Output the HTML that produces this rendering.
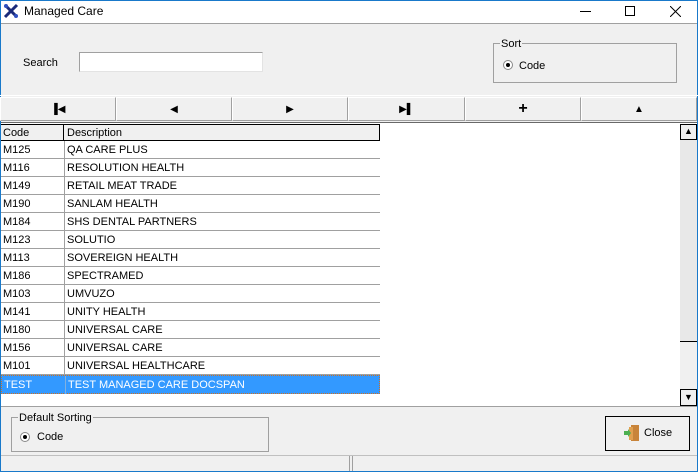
<!DOCTYPE html><html><head><style>
*{margin:0;padding:0;box-sizing:border-box}
body{width:698px;height:472px;position:relative;background:#f0f0f0;font-family:"Liberation Sans",sans-serif;font-size:11px;overflow:hidden}
.a{position:absolute}
.btn{position:absolute;top:97px;height:24px;border:1px solid;border-color:#fff #a0a0a0 #a0a0a0 #fff;background:#f0f0f0;display:flex;align-items:center;justify-content:center;font-size:10px}
.row{position:absolute;left:1px;width:379px;height:18px;border-bottom:1px solid #a0a0a0;background:#fff}
.row span{position:absolute;top:3px}
.row .c{left:2px}.row .d{border-left:1px solid #a0a0a0;height:18px;top:0;padding-top:3px;padding-left:2px;left:63px}
</style></head><body>
<div class="a" style="left:0;top:0;width:698px;height:24px;background:#fff;border-bottom:1px solid #a0a0a0"></div>
<div class="a" style="left:0;top:0;width:1px;height:472px;background:#1979ca"></div>
<div class="a" style="right:0;top:0;width:1px;height:472px;background:#1979ca"></div>
<div class="a" style="left:0;bottom:0;width:698px;height:1px;background:#1979ca"></div>
<div class="a" style="left:0;top:0;width:698px;height:1px;background:#1979ca"></div>
<svg class="a" style="left:3px;top:3px" width="16" height="16"><path d="M2 2L14 14M14 2L2 14" stroke="#1a2a7a" stroke-width="3"/><circle cx="3" cy="3" r="2" fill="#3050c0"/><circle cx="13" cy="13" r="2" fill="#3050c0"/></svg>
<div class="a" style="left:24px;top:4px;font-size:12px">Managed Care</div>
<div class="a" style="left:580px;top:11px;width:11px;height:1px;background:#000"></div>
<div class="a" style="left:625px;top:6px;width:10px;height:10px;border:1px solid #000"></div>
<svg class="a" style="left:670px;top:6px" width="11" height="11"><path d="M0 0L11 11M11 0L0 11" stroke="#000"/></svg>
<div class="a" style="left:23px;top:57px">Search</div>
<div class="a" style="left:79px;top:52px;width:184px;height:20px;background:#fff;border:1px solid;border-color:#a0a0a0 #e3e3e3 #e3e3e3 #a0a0a0"></div>
<div class="a" style="left:493px;top:43px;width:184px;height:40px;border:1px solid #a0a0a0"></div>
<div class="a" style="left:500px;top:38px;background:#f0f0f0;padding:0 1px">Sort</div>
<div class="a" style="left:503px;top:60px;width:10px;height:10px;border-radius:50%;background:#fff;border:1px solid #888"><div class="a" style="left:2px;top:2px;width:4px;height:4px;border-radius:50%;background:#000"></div></div>
<div class="a" style="left:519px;top:60px">Code</div>
<div class="a" style="left:0;top:95px;width:698px;height:1px;background:#fff"></div>
<div class="btn" style="left:0;width:116px">▐◀</div>
<div class="btn" style="left:116px;width:116px">◀</div>
<div class="btn" style="left:232px;width:116px">▶</div>
<div class="btn" style="left:348px;width:117px">▶▌</div>
<div class="btn" style="left:465px;width:116px;font-size:16px;font-weight:bold">+</div>
<div class="btn" style="left:581px;width:116px">▲</div>
<div class="a" style="left:1px;top:122px;width:696px;height:284px;background:#fff;border-top:1px solid #696969"></div>
<div class="a" style="left:1px;top:124px;width:379px;height:17px;background:#f0f0f0;border:1px solid #000;border-left:none"></div>
<div class="a" style="left:63px;top:124px;width:1px;height:17px;background:#000"></div>
<div class="a" style="left:3px;top:127px">Code</div>
<div class="a" style="left:67px;top:127px">Description</div>
<div class="row" style="top:141px"><span class="c">M125</span><span class="d">QA CARE PLUS</span></div>
<div class="row" style="top:159px"><span class="c">M116</span><span class="d">RESOLUTION HEALTH</span></div>
<div class="row" style="top:177px"><span class="c">M149</span><span class="d">RETAIL MEAT TRADE</span></div>
<div class="row" style="top:195px"><span class="c">M190</span><span class="d">SANLAM HEALTH</span></div>
<div class="row" style="top:213px"><span class="c">M184</span><span class="d">SHS DENTAL PARTNERS</span></div>
<div class="row" style="top:231px"><span class="c">M123</span><span class="d">SOLUTIO</span></div>
<div class="row" style="top:249px"><span class="c">M113</span><span class="d">SOVEREIGN HEALTH</span></div>
<div class="row" style="top:267px"><span class="c">M186</span><span class="d">SPECTRAMED</span></div>
<div class="row" style="top:285px"><span class="c">M103</span><span class="d">UMVUZO</span></div>
<div class="row" style="top:303px"><span class="c">M141</span><span class="d">UNITY HEALTH</span></div>
<div class="row" style="top:321px"><span class="c">M180</span><span class="d">UNIVERSAL CARE</span></div>
<div class="row" style="top:339px"><span class="c">M156</span><span class="d">UNIVERSAL CARE</span></div>
<div class="row" style="top:357px"><span class="c">M101</span><span class="d">UNIVERSAL HEALTHCARE</span></div>
<div class="row" style="top:375px;height:19px;background:#3399ff;color:#fff;border:1px dotted #d07020"><span class="c">TEST</span><span class="d" style="border-left-color:#80b0e0">TEST MANAGED CARE DOCSPAN</span></div>
<div class="a" style="left:680px;top:124px;width:17px;height:282px;background:#e8e8e8"></div>
<div class="a" style="left:680px;top:124px;width:17px;height:16px;background:#f0f0f0;border:1px solid #000;font-size:9px;text-align:center;line-height:13px">▲</div>
<div class="a" style="left:680px;top:341px;width:17px;height:48px;background:#f0f0f0;border-top:1px solid #000"></div>
<div class="a" style="left:680px;top:389px;width:17px;height:17px;background:#f0f0f0;border:1px solid #000;font-size:9px;text-align:center;line-height:14px">▼</div>
<div class="a" style="left:1px;top:406px;width:696px;height:1px;background:#a0a0a0"></div>
<div class="a" style="left:11px;top:417px;width:258px;height:35px;border:1px solid #a0a0a0"></div>
<div class="a" style="left:18px;top:412px;background:#f0f0f0;padding:0 1px">Default Sorting</div>
<div class="a" style="left:20px;top:432px;width:10px;height:10px;border-radius:50%;background:#fff;border:1px solid #888"><div class="a" style="left:2px;top:2px;width:4px;height:4px;border-radius:50%;background:#000"></div></div>
<div class="a" style="left:37px;top:431px">Code</div>
<div class="a" style="left:605px;top:416px;width:85px;height:35px;border:1px solid #000;background:#f0f0f0"></div>
<svg class="a" style="left:623px;top:424px" width="18" height="18"><rect x="8" y="1" width="8" height="16" fill="#c8843a"/><rect x="6" y="3" width="4" height="13" fill="#e0a050"/><path d="M1 7h4V5l3 4-3 4v-2H1z" fill="#4caf50"/></svg>
<div class="a" style="left:644px;top:427px">Close</div>
<div class="a" style="left:1px;top:455px;width:696px;height:1px;background:#c0c0c0"></div>
<div class="a" style="left:349px;top:456px;width:1px;height:15px;background:#a0a0a0"></div>
<div class="a" style="left:352px;top:456px;width:1px;height:15px;background:#a0a0a0"></div>
</body></html>
